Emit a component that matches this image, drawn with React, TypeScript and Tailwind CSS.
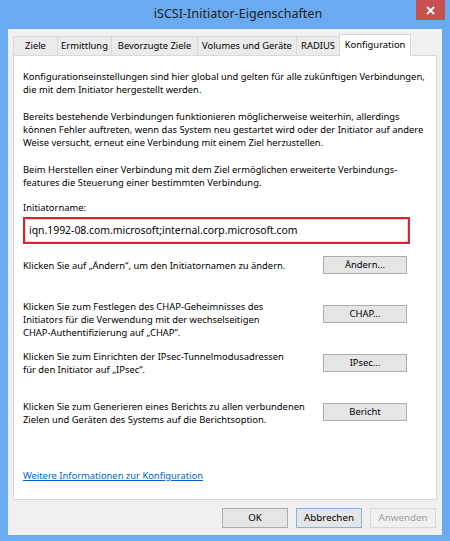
import React from "react";

const font = { fontFamily: '"Noto Sans", "Open Sans", Arial, sans-serif' };

function WinButton({ label, variant = "normal" }: { label: string; variant?: "normal" | "default" | "disabled" }) {
  const cls =
    variant === "default"
      ? "border-[#7eb4ea] bg-[#e5e5e5] text-black"
      : variant === "disabled"
      ? "border-[#d9d9d9] bg-[#f0f0f0] text-[#a0a0a0]"
      : "border-[#adadad] bg-[#e5e5e5] text-black";
  return (
    <div className={`flex h-[20px] w-[66px] items-center justify-center border text-[9.8px] leading-none ${cls}`}>
      {label}
    </div>
  );
}

function PanelButton({ label }: { label: string }) {
  return (
    <div className="flex h-[18px] w-[84px] shrink-0 items-center justify-center border border-[#adadad] bg-[#e5e5e5] text-[9.4px] leading-none text-black">
      {label}
    </div>
  );
}

const tabs = ["Ziele", "Ermittlung", "Bevorzugte Ziele", "Volumes und Geräte", "RADIUS"];
const tabWidths = ["w-[45px]", "w-[55px]", "w-[87px]", "w-[100px]", "w-[44px]"];

export default function App() {
  return (
    <div style={font} className="flex h-[541px] w-[450px] flex-col bg-[#6aaaf0] text-black">
      {/* Titelleiste */}
      <div className="flex h-[29px] items-start">
        <div className="flex h-[29px] flex-1 items-center justify-center pl-[60px] text-[12.6px] text-[#1e1e1e]">
          iSCSI-Initiator-Eigenschaften
        </div>
        <div className="mr-[5px] flex h-[20px] w-[29px] items-center justify-center bg-[#c75050]">
          <svg width="9" height="9" viewBox="0 0 9 9">
            <path d="M1 1 L8 8 M8 1 L1 8" stroke="white" strokeWidth="1.8" />
          </svg>
        </div>
      </div>

      {/* Client-Bereich */}
      <div className="mx-[8px] mb-[6px] flex flex-1 flex-col bg-[#f0f0f0] px-[5px] pt-[5px]">
        {/* Reiter */}
        <div className="flex h-[21px] items-end">
          {tabs.map((t, i) => (
            <div
              key={t}
              className={`-mr-px flex h-[19px] items-center justify-center border border-b-0 border-[#d9d9d9] bg-[#ebebeb] text-[9.4px] leading-none ${tabWidths[i]}`}
            >
              {t}
            </div>
          ))}
          <div className="relative z-10 -mb-px flex h-[22px] w-[72px] items-center justify-center border border-b-0 border-[#d9d9d9] bg-white pb-[2px] text-[9.4px] leading-none">
            Konfiguration
          </div>
        </div>

        {/* Registerkarte */}
        <div className="flex h-[445px] w-[424px] flex-col border border-[#d9d9d9] bg-white pl-[9px] pt-[14px] text-[9.4px] leading-[13px]">
          <p className="whitespace-nowrap">
            Konfigurationseinstellungen sind hier global und gelten für alle zukünftigen Verbindungen,
            <br />
            die mit dem Initiator hergestellt werden.
          </p>
          <p className="mt-[14px] whitespace-nowrap">
            Bereits bestehende Verbindungen funktionieren möglicherweise weiterhin, allerdings
            <br />
            können Fehler auftreten, wenn das System neu gestartet wird oder der Initiator auf andere
            <br />
            Weise versucht, erneut eine Verbindung mit einem Ziel herzustellen.
          </p>
          <p className="mt-[14px] whitespace-nowrap">
            Beim Herstellen einer Verbindung mit dem Ziel ermöglichen erweiterte Verbindungs-
            <br />
            features die Steuerung einer bestimmten Verbindung.
          </p>

          <p className="mt-[12px]">Initiatorname:</p>
          <div className="mt-[3px] flex h-[27px] w-[387px] items-center border-2 border-[#d7262b] bg-white">
            <div className="flex h-full w-full items-center border border-[#d9d9d9] pl-[3px] text-[10.4px]">
              iqn.1992-08.com.microsoft;internal.corp.microsoft.com
            </div>
          </div>

          <div className="mt-[12px] flex w-[384px] items-center justify-between">
            <p className="whitespace-nowrap">Klicken Sie auf „Ändern“, um den Initiatornamen zu ändern.</p>
            <PanelButton label="Ändern..." />
          </div>

          <div className="mt-[26px] flex w-[384px] items-start justify-between">
            <p className="whitespace-nowrap">
              Klicken Sie zum Festlegen des CHAP-Geheimnisses des
              <br />
              Initiators für die Verwendung mit der wechselseitigen
              <br />
              CHAP-Authentifizierung auf „CHAP“.
            </p>
            <div className="mt-[5px]">
              <PanelButton label="CHAP..." />
            </div>
          </div>

          <div className="mt-[11px] flex w-[384px] items-start justify-between">
            <p className="whitespace-nowrap">
              Klicken Sie zum Einrichten der IPsec-Tunnelmodusadressen
              <br />
              für den Initiator auf „IPsec“.
            </p>
            <div className="mt-[4px]">
              <PanelButton label="IPsec..." />
            </div>
          </div>

          <div className="mt-[24px] flex w-[384px] items-start justify-between">
            <p className="whitespace-nowrap">
              Klicken Sie zum Generieren eines Berichts zu allen verbundenen
              <br />
              Zielen und Geräten des Systems auf die Berichtsoption.
            </p>
            <div className="mt-[3px]">
              <PanelButton label="Bericht" />
            </div>
          </div>

          <a className="mt-[43px] self-start text-[#0066cc] underline">Weitere Informationen zur Konfiguration</a>
        </div>

        {/* Dialogschaltflächen */}
        <div className="mt-[8px] flex justify-end gap-[8px] pr-[1px]">
          <WinButton label="OK" />
          <WinButton label="Abbrechen" variant="default" />
          <WinButton label="Anwenden" variant="disabled" />
        </div>
      </div>
    </div>
  );
}
